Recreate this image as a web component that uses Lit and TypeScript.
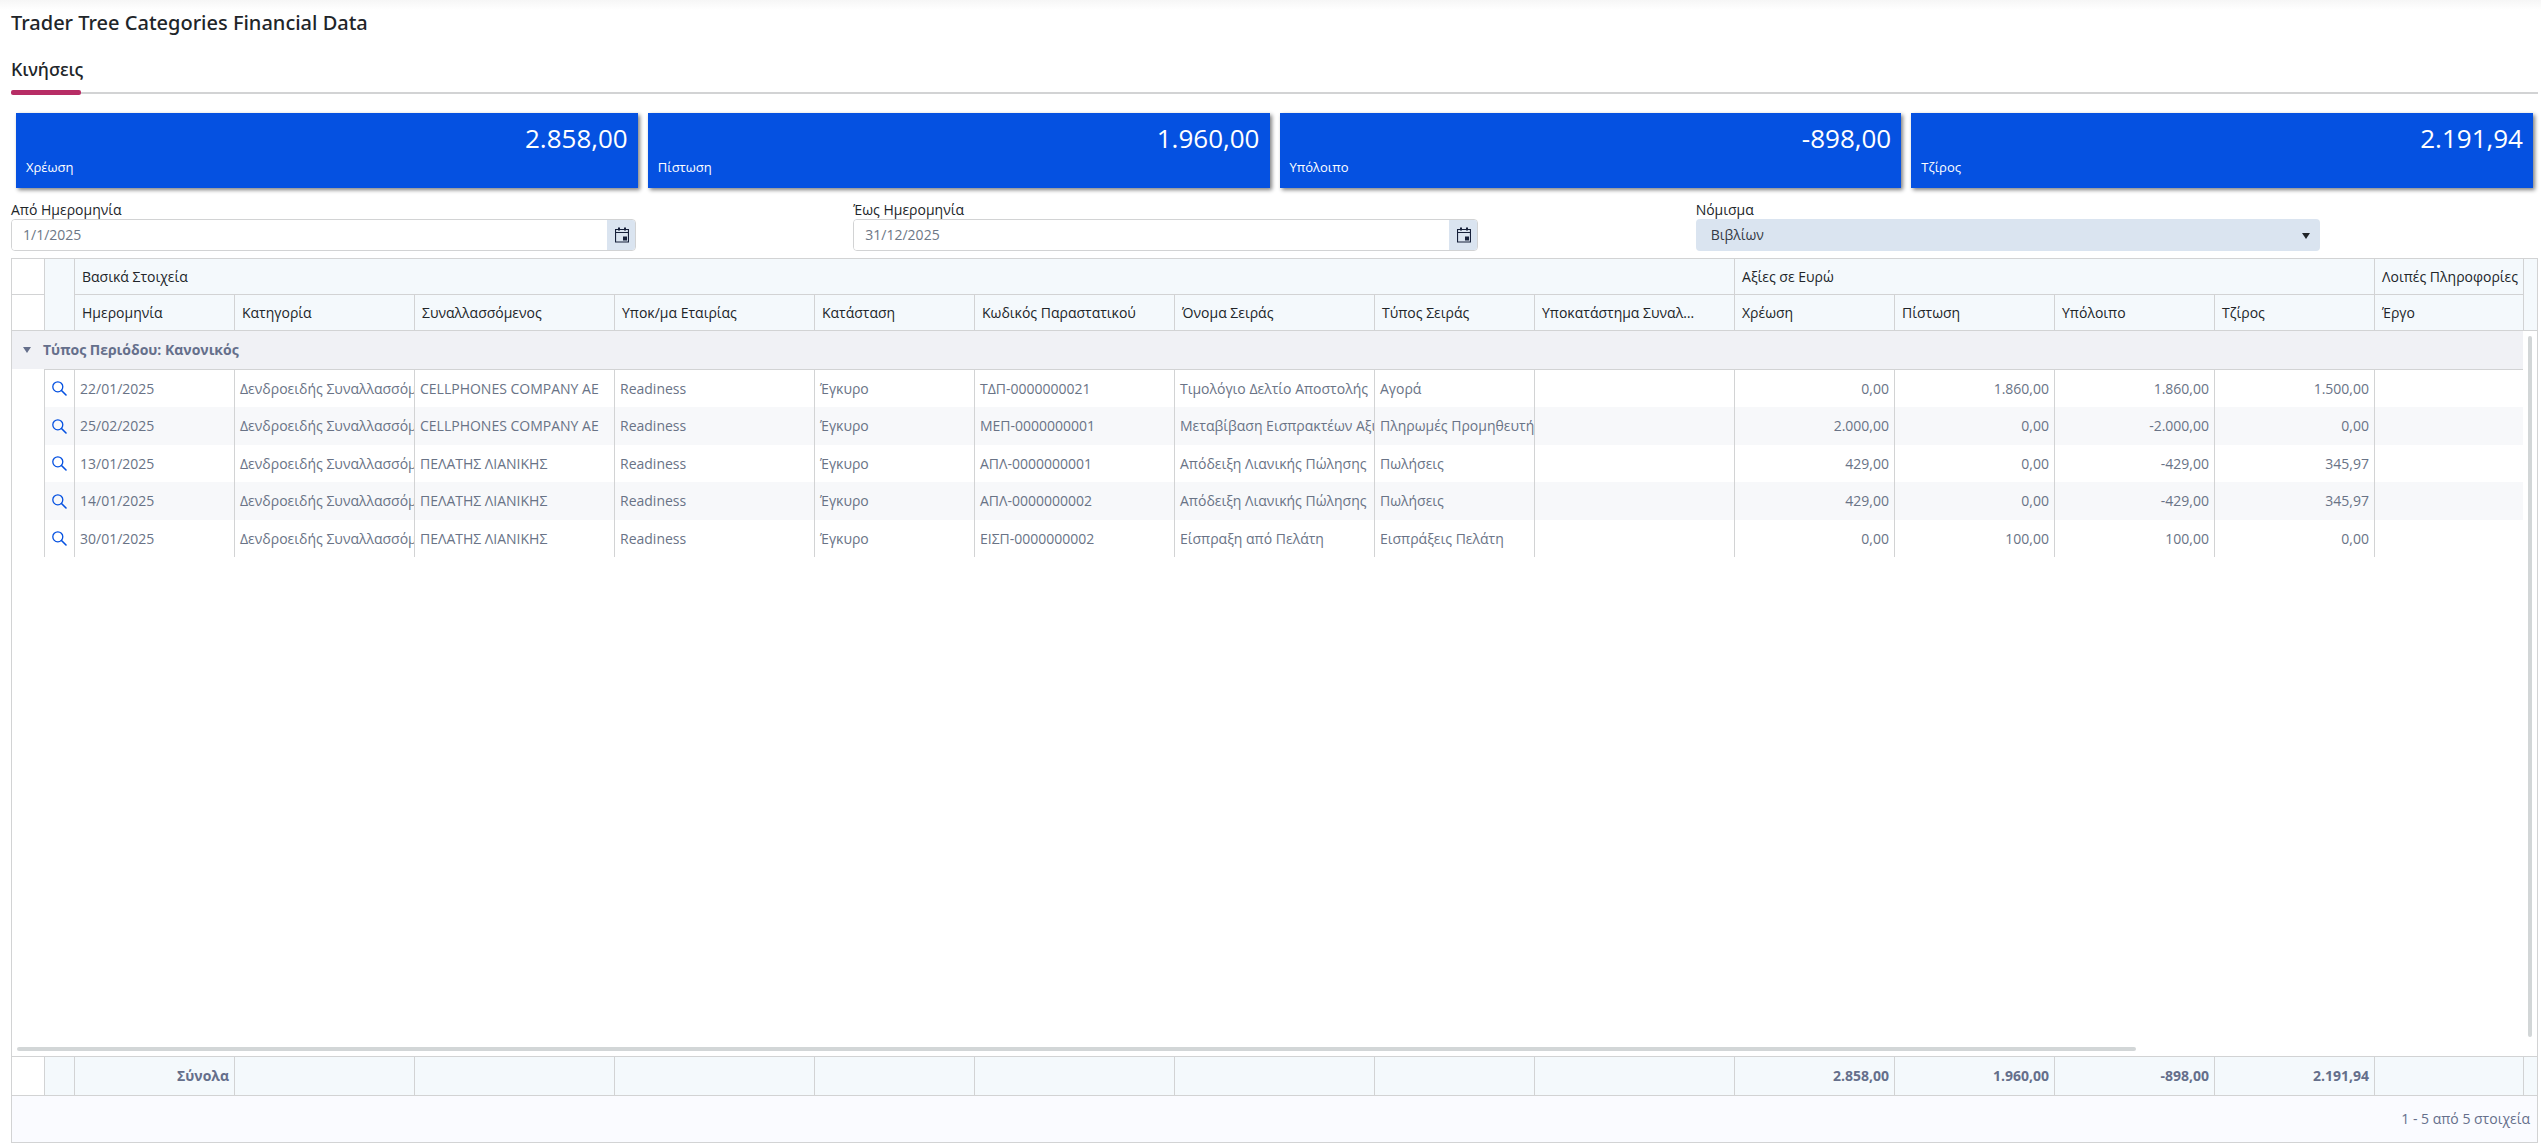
import { LitElement, html, css, svg } from "lit";
import { customElement, state } from "lit/decorators.js";
import { classMap } from "lit/directives/class-map.js";

interface Card { label: string; value: string; }
interface Column { title: string; width: number; numeric?: boolean; total?: string; }

const CARDS: Card[] = [
  { label: "Χρέωση", value: "2.858,00" },
  { label: "Πίστωση", value: "1.960,00" },
  { label: "Υπόλοιπο", value: "-898,00" },
  { label: "Τζίρος", value: "2.191,94" },
];

const COLUMNS: Column[] = [
  { title: "Ημερομηνία", width: 160, total: "Σύνολα" },
  { title: "Κατηγορία", width: 180 },
  { title: "Συναλλασσόμενος", width: 200 },
  { title: "Υποκ/μα Εταιρίας", width: 200 },
  { title: "Κατάσταση", width: 160 },
  { title: "Κωδικός Παραστατικού", width: 200 },
  { title: "Όνομα Σειράς", width: 200 },
  { title: "Τύπος Σειράς", width: 160 },
  { title: "Υποκατάστημα Συναλλασσόμενου", width: 200 },
  { title: "Χρέωση", width: 160, numeric: true, total: "2.858,00" },
  { title: "Πίστωση", width: 160, numeric: true, total: "1.960,00" },
  { title: "Υπόλοιπο", width: 160, numeric: true, total: "-898,00" },
  { title: "Τζίρος", width: 160, numeric: true, total: "2.191,94" },
  { title: "Έργο", width: 0 },
];

const CATEGORY = "Δενδροειδής Συναλλασσόμενος";

const ROWS: string[][] = [
  ["22/01/2025", CATEGORY, "CELLPHONES COMPANY ΑΕ", "Readiness", "Έγκυρο", "ΤΔΠ-0000000021", "Τιμολόγιο Δελτίο Αποστολής", "Αγορά", "", "0,00", "1.860,00", "1.860,00", "1.500,00", ""],
  ["25/02/2025", CATEGORY, "CELLPHONES COMPANY ΑΕ", "Readiness", "Έγκυρο", "ΜΕΠ-0000000001", "Μεταβίβαση Εισπρακτέων Αξιογράφων", "Πληρωμές Προμηθευτή", "", "2.000,00", "0,00", "-2.000,00", "0,00", ""],
  ["13/01/2025", CATEGORY, "ΠΕΛΑΤΗΣ ΛΙΑΝΙΚΗΣ", "Readiness", "Έγκυρο", "ΑΠΛ-0000000001", "Απόδειξη Λιανικής Πώλησης", "Πωλήσεις", "", "429,00", "0,00", "-429,00", "345,97", ""],
  ["14/01/2025", CATEGORY, "ΠΕΛΑΤΗΣ ΛΙΑΝΙΚΗΣ", "Readiness", "Έγκυρο", "ΑΠΛ-0000000002", "Απόδειξη Λιανικής Πώλησης", "Πωλήσεις", "", "429,00", "0,00", "-429,00", "345,97", ""],
  ["30/01/2025", CATEGORY, "ΠΕΛΑΤΗΣ ΛΙΑΝΙΚΗΣ", "Readiness", "Έγκυρο", "ΕΙΣΠ-0000000002", "Είσπραξη από Πελάτη", "Εισπράξεις Πελάτη", "", "0,00", "100,00", "100,00", "0,00", ""],
];

const calendarIcon = html`<svg width="14" height="16" viewBox="0 0 14 16" aria-hidden="true">
  ${svg`<path d="M.5 2.5h13v12.500h-13z M.5 5.500h13" fill="none" stroke="#16203a" stroke-width="1.200"/>
  <path d="M3 .5h2v3h-2z M9 .5h2v3h-2z M8 9.500h4v4h-4z" fill="#16203a"/>`}
</svg>`;

const searchIcon = html`<svg width="15" height="15" viewBox="0 0 15 15" aria-hidden="true">
  ${svg`<circle cx="5.800" cy="5.800" r="5" fill="none" stroke="#0551e1" stroke-width="1.300"/>
  <path d="M9.500 9.500L14 14" stroke="#0551e1" stroke-width="1.600" stroke-linecap="round"/>`}
</svg>`;

@customElement("app-root")
export class AppRoot extends LitElement {
  static styles = css`
    :host {
      display: block;
      font-family: "Open Sans", "Noto Sans", sans-serif;
      font-size: 14px;
      line-height: 20px;
      color: #212529;
      background: #fff;
    }
    * { box-sizing: border-box; }
    .page {
      display: flex;
      flex-direction: column;
      min-height: 100vh;
      padding: 10px 3px 5px 11px;
      background: linear-gradient(#f6f6f6, #fff 10px);
    }
    h1 {
      margin: 0;
      font-family: "Noto Sans", sans-serif;
      font-size: 20px;
      line-height: 26px;
      font-weight: 500;
    }
    .tabs {
      display: flex;
      margin-top: 22px;
      height: 37px;
      background: linear-gradient(#d2d3d4, #d2d3d4) 0 34px / 100% 2px no-repeat;
    }
    .tab {
      display: flex;
      flex-direction: column;
      justify-content: space-between;
      width: 70px;
      padding: 0;
      border: 0;
      background: none;
      font-family: "Noto Sans", sans-serif;
      font-size: 18px;
      line-height: 22px;
      font-weight: 500;
      color: #212529;
      text-align: left;
      white-space: nowrap;
    }
    .tab::after {
      content: "";
      height: 5px;
      width: 70px;
      border-radius: 2px;
      background: #b72d65;
    }
    .cards {
      display: grid;
      grid-template-columns: repeat(4, 1fr);
      gap: 10px;
      padding: 18px 5px 0;
    }
    .card {
      height: 75px;
      padding: 7px 10px;
      background: #0551e1;
      color: #fff;
      box-shadow: 2px 2px 4px #808080;
    }
    .card-value {
      font-size: 26px;
      line-height: 36px;
      text-align: right;
    }
    .card-label { font-size: 13px; line-height: 22px; }
    .filters {
      display: grid;
      grid-template-columns: repeat(3, 1fr);
      margin-top: 12px;
    }
    .field {
      display: flex;
      flex-direction: column;
      width: calc(75% - 7px);
    }
    .field label { line-height: 19px; }
    .box {
      display: flex;
      height: 32px;
      border: 1px solid #d2d3d4;
      border-radius: 4px;
      overflow: hidden;
    }
    .box input {
      flex: 1;
      min-width: 0;
      padding: 0 11px;
      border: 0;
      outline: 0;
      background: #fff;
      font: inherit;
      color: #6d7786;
    }
    .box button {
      display: flex;
      align-items: center;
      justify-content: center;
      width: 28px;
      padding: 0 0 0 2px;
      border: 0;
      background: #dae4f0;
    }
    .select { position: relative; display: flex; }
    .select select {
      flex: 1;
      height: 32px;
      padding: 0 15px;
      border: 0;
      border-radius: 4px;
      appearance: none;
      background: #dae4f0;
      font: inherit;
      color: #343a45;
    }
    .select::after {
      content: "";
      position: absolute;
      right: 10px;
      top: 14px;
      border: 4px solid transparent;
      border-top: 6px solid #212529;
      border-bottom: 0;
      pointer-events: none;
    }
    .grid {
      display: flex;
      flex: 1;
      flex-direction: column;
      margin-top: 7px;
      border: 1px solid #d2d3d4;
    }
    .band { display: flex; background: #f4f9fc; }
    .band .gutter { width: 14px; border-left: 1px solid #d2d3d4; }
    .band table { flex: 1; width: 0; }
    .head { border-bottom: 1px solid #d2d3d4; }
    table {
      width: 100%;
      table-layout: fixed;
      border-collapse: separate;
      border-spacing: 0;
    }
    .w-toggle { width: 32px; }
    .w-icon { width: 30px; }
    th, td {
      padding: 0 7px;
      border-left: 1px solid #d2d3d4;
      font-weight: 400;
      text-align: left;
      white-space: nowrap;
      overflow: hidden;
    }
    th { height: 35px; padding-right: 0; text-overflow: ellipsis; }
    .sub th { height: 36px; padding-right: 36px; border-top: 1px solid #d2d3d4; }
    .first, .sub .first { border-left: 0; padding: 0; background: #fff; }
    .group-row td {
      height: 38px;
      border-left: 0;
      background: #f0f1f5;
      padding-left: 11px;
      color: #656f8b;
      font-weight: 700;
    }
    .toggle {
      display: flex;
      align-items: center;
      gap: 12px;
      padding: 0;
      border: 0;
      background: none;
      font: inherit;
      color: inherit;
    }
    .toggle::before {
      content: "";
      border: 4px solid transparent;
      border-top: 6px solid #656f8b;
      border-bottom: 0;
    }
    .rows { flex: 1; display: flex; position: relative; }
    .viewport { flex: 1; padding-right: 14px; }
    .row td { height: 37px; padding: 0 5px; color: #697386; }
    .row.odd td { height: 38px; }
    .row.odd td:not(.first) { background: #f7f8fa; }
    .row.top td { height: 38px; }
    .row.top td:not(.first) { border-top: 1px solid #d2d3d4; }
    .row td.icon { padding: 0; }
    .icon button {
      display: flex;
      justify-content: center;
      width: 100%;
      padding: 0;
      border: 0;
      background: none;
    }
    td.num { text-align: right; }
    .bar { position: absolute; border-radius: 2px; background: #d2d6d7; }
    .bar.v { right: 5px; top: 5px; bottom: 19px; width: 4px; }
    .bar.h { left: 5px; right: 401px; bottom: 5px; height: 4px; }
    .foot { border-top: 1px solid #d2d3d4; border-bottom: 1px solid #d2d3d4; }
    .foot td {
      height: 38px;
      padding: 0 5px;
      color: #656f8b;
      font-weight: 700;
      text-align: right;
    }
    .pager {
      display: flex;
      justify-content: flex-end;
      align-items: center;
      height: 46px;
      padding: 0 7px;
      background: #fafbff;
      color: #656f8b;
    }
  `;

  @state() private expanded = true;

  private cols() {
    return html`<colgroup>
      <col class="w-toggle" /><col class="w-icon" />
      ${COLUMNS.map((c) => html`<col style=${c.width ? `width:${c.width}px` : ""} />`)}
    </colgroup>`;
  }

  private dateField(id: string, label: string, value: string) {
    return html`<div class="field">
      <label for=${id}>${label}</label>
      <div class="box">
        <input id=${id} type="text" .value=${value} />
        <button type="button" aria-label=${label}>${calendarIcon}</button>
      </div>
    </div>`;
  }

  render() {
    return html`<main class="page">
      <h1>Trader Tree Categories Financial Data</h1>
      <div class="tabs" role="tablist">
        <button class="tab" role="tab" aria-selected="true">Κινήσεις</button>
      </div>
      <section class="cards">
        ${CARDS.map((c) => html`<div class="card">
          <div class="card-value">${c.value}</div>
          <div class="card-label">${c.label}</div>
        </div>`)}
      </section>
      <section class="filters">
        ${this.dateField("from", "Από Ημερομηνία", "1/1/2025")}
        ${this.dateField("to", "Έως Ημερομηνία", "31/12/2025")}
        <div class="field">
          <label for="currency">Νόμισμα</label>
          <div class="select"><select id="currency"><option>Βιβλίων</option></select></div>
        </div>
      </section>
      <section class="grid">
        <div class="band head">
          <table>
            ${this.cols()}
            <thead>
              <tr>
                <th class="first"></th>
                <th rowspan="2"></th>
                <th colspan="9">Βασικά Στοιχεία</th>
                <th colspan="4">Αξίες σε Ευρώ</th>
                <th>Λοιπές Πληροφορίες</th>
              </tr>
              <tr class="sub">
                <th class="first"></th>
                ${COLUMNS.map((c) => html`<th>${c.title}</th>`)}
              </tr>
            </thead>
          </table>
          <div class="gutter"></div>
        </div>
        <div class="rows">
          <div class="viewport">
            <table>
              ${this.cols()}
              <tbody>
                <tr class="group-row">
                  <td colspan="16">
                    <button class="toggle" aria-expanded=${this.expanded} @click=${() => (this.expanded = !this.expanded)}>Τύπος Περιόδου: Κανονικός</button>
                  </td>
                </tr>
                ${this.expanded ? ROWS.map((r, i) => html`<tr class=${classMap({ row: true, odd: i % 2 === 1, top: i === 0 })}>
                  <td class="first"></td>
                  <td class="icon"><button type="button" aria-label="Προβολή">${searchIcon}</button></td>
                  ${r.map((v, j) => html`<td class=${classMap({ num: !!COLUMNS[j].numeric })}>${v}</td>`)}
                </tr>`) : ""}
              </tbody>
            </table>
          </div>
          <div class="bar v"></div>
          <div class="bar h"></div>
        </div>
        <div class="band foot">
          <table>
            ${this.cols()}
            <tbody>
              <tr>
                <td class="first"></td>
                <td></td>
                ${COLUMNS.map((c) => html`<td>${c.total ?? ""}</td>`)}
              </tr>
            </tbody>
          </table>
          <div class="gutter"></div>
        </div>
        <div class="pager">1 - 5 από 5 στοιχεία</div>
      </section>
    </main>`;
  }
}
